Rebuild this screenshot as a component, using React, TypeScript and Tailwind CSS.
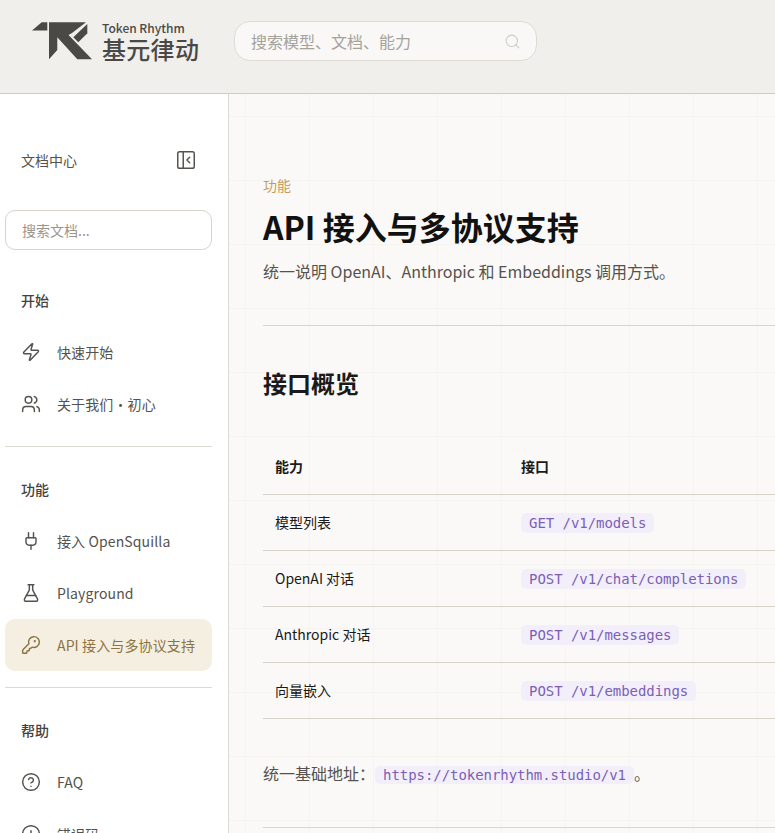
import { PanelLeftClose, Search, Zap, Users, Plug, FlaskConical, KeyRound, CircleHelp, CircleAlert } from "lucide-react";
import type { ReactNode } from "react";

const sans = "font-['Noto_Sans_CJK_SC','Noto_Sans',sans-serif]";

function Logo() {
  return (
    <svg width="61" height="38" viewBox="0 0 61 38" className="mt-px shrink-0" fill="#4a4946">
      <path d="M0 8.6 L9.7 0.3 L15.3 0.3 L15.3 8.6 Z" />
      <path d="M17 0.3 L54 0.3 L40 11 L36.5 13 L60 37.3 L45.3 37.3 L25.3 15.3 L25.3 28 L17 37.3 Z" />
      <path d="M55.3 2 L55.3 11.3 L46.3 20.3 L41.3 15.3 Z" />
    </svg>
  );
}

function Item({ icon, label, active }: { icon: ReactNode; label: string; active?: boolean }) {
  return (
    <div className={`flex h-[52px] w-[207px] items-center gap-4 rounded-[10px] pl-4 text-[14px] tracking-[0.12px] ${active ? "bg-[#f5efe1] text-[#8d7343]" : "text-[#55524d]"}`}>
      <span className="flex w-5 justify-center">{icon}</span>
      <span className="whitespace-nowrap">{label}</span>
    </div>
  );
}

function Section({ title }: { title: string }) {
  return <div className="flex h-[52px] items-center pl-4 text-[14px] font-medium text-[#45423e]">{title}</div>;
}

const rows = [
  ["模型列表", "GET /v1/models"],
  ["OpenAI 对话", "POST /v1/chat/completions"],
  ["Anthropic 对话", "POST /v1/messages"],
  ["向量嵌入", "POST /v1/embeddings"],
];

const code = "rounded-[5px] bg-[#f3effa] px-2 py-px font-['DejaVu_Sans_Mono',monospace] text-[14px] leading-[18px] tracking-[-0.05px] text-[#7a5fb5]";

export default function App() {
  return (
    <div className={`flex h-[833px] w-[775px] flex-col overflow-hidden bg-white ${sans}`}>
      <header className="flex h-[94px] shrink-0 items-start border-b border-[#cfccc6] bg-[#f0efec] pt-[21px]">
        <div className="ml-[32px] flex items-start">
          <Logo />
          <div className="ml-[9px] flex w-[97px] flex-col text-[#4a4946]">
            <span className="whitespace-nowrap text-[12px] font-medium leading-[14px]">Token Rhythm</span>
            <span className="whitespace-nowrap text-[24px] font-medium leading-[27px] tracking-[0.3px]">基元律动</span>
          </div>
        </div>
        <div className="ml-[35px] flex h-10 w-[303px] items-center justify-between rounded-[16px] border border-[#dedbd6] bg-[#f9f8f6] pl-4 pr-[15px] text-[16px] text-[#a5a29c]">
          <span>搜索模型、文档、能力</span>
          <Search size={17} strokeWidth={1.5} className="text-[#cfccc7]" />
        </div>
      </header>
      <div className="flex min-h-0 flex-1">
        <aside className="w-[229px] shrink-0 overflow-hidden border-r border-[#dcd9d3] bg-white px-[5px]">
          <div className="mt-[46px] flex h-[40px] w-[207px] items-center justify-between pl-4 pr-[15px] text-[14px] text-[#55524d]">
            <span>文档中心</span>
            <PanelLeftClose size={22} strokeWidth={1.6} className="text-[#55524d]" />
          </div>
          <div className="mt-[30px] flex h-10 w-[207px] items-center rounded-[10px] border border-[#d8d4cd] pl-4 text-[14px] text-[#9a958d]">搜索文档...</div>
          <div className="mt-[24px]"><Section title="开始" /></div>
          <Item icon={<Zap size={20} strokeWidth={1.75} />} label="快速开始" />
          <Item icon={<Users size={20} strokeWidth={1.75} />} label="关于我们・初心" />
          <div className="my-4 w-[207px] border-t border-[#dcd9d3]" />
          <Section title="功能" />
          <Item icon={<Plug size={20} strokeWidth={1.75} />} label="接入 OpenSquilla" />
          <Item icon={<FlaskConical size={20} strokeWidth={1.75} />} label="Playground" />
          <Item icon={<KeyRound size={20} strokeWidth={1.75} />} label="API 接入与多协议支持" active />
          <div className="my-4 w-[207px] border-t border-[#dcd9d3]" />
          <Section title="帮助" />
          <Item icon={<CircleHelp size={20} strokeWidth={1.75} />} label="FAQ" />
          <Item icon={<CircleAlert size={20} strokeWidth={1.75} />} label="错误码" />
        </aside>
        <main className="min-w-0 flex-1 overflow-hidden bg-[#faf9f7] bg-[linear-gradient(to_right,#f5f4f1_1px,transparent_1px),linear-gradient(to_bottom,#f5f4f1_1px,transparent_1px)] bg-[size:64px_64px] bg-[position:16px_22px] pl-[34px] pt-[81px]">
          <div className="w-[640px]">
            <div className="text-[14px] leading-5 text-[#c79c5e]">功能</div>
            <h1 className="mt-[11px] text-[32px] font-bold leading-[40px] text-[#111111]">API 接入与多协议支持</h1>
            <p className="mt-[13px] text-[16px] leading-6 text-[#55524d]">统一说明 OpenAI、Anthropic 和 Embeddings 调用方式。</p>
            <div className="mt-[42px] border-t border-[#d8d6d1]" />
            <h2 className="mt-[39px] text-[24px] font-bold leading-[36px] text-[#1a1a1a]">接口概览</h2>
            <div className="mt-[38px] grid grid-cols-[246px_1fr] text-[14px] text-[#1a1a1a]">
              <div className="flex h-[56px] items-center border-b border-[#d6d3cb] pl-3 font-bold">能力</div>
              <div className="flex h-[56px] items-center border-b border-[#d6d3cb] pl-3 font-bold">接口</div>
              {rows.map(([a, b]) => (
                <div key={b} className="contents">
                  <div className="flex h-[56px] items-center border-b border-[#d6d3cb] pl-3">{a}</div>
                  <div className="flex h-[56px] items-center border-b border-[#d6d3cb] pl-3"><code className={code}>{b}</code></div>
                </div>
              ))}
            </div>
            <p className="mt-[42px] text-[16px] leading-6 text-[#55524d]">统一基础地址：<code className={code}>https://tokenrhythm.studio/v1</code>。</p>
            <div className="mt-[42px] border-t border-[#d8d6d1]" />
          </div>
        </main>
      </div>
    </div>
  );
}
